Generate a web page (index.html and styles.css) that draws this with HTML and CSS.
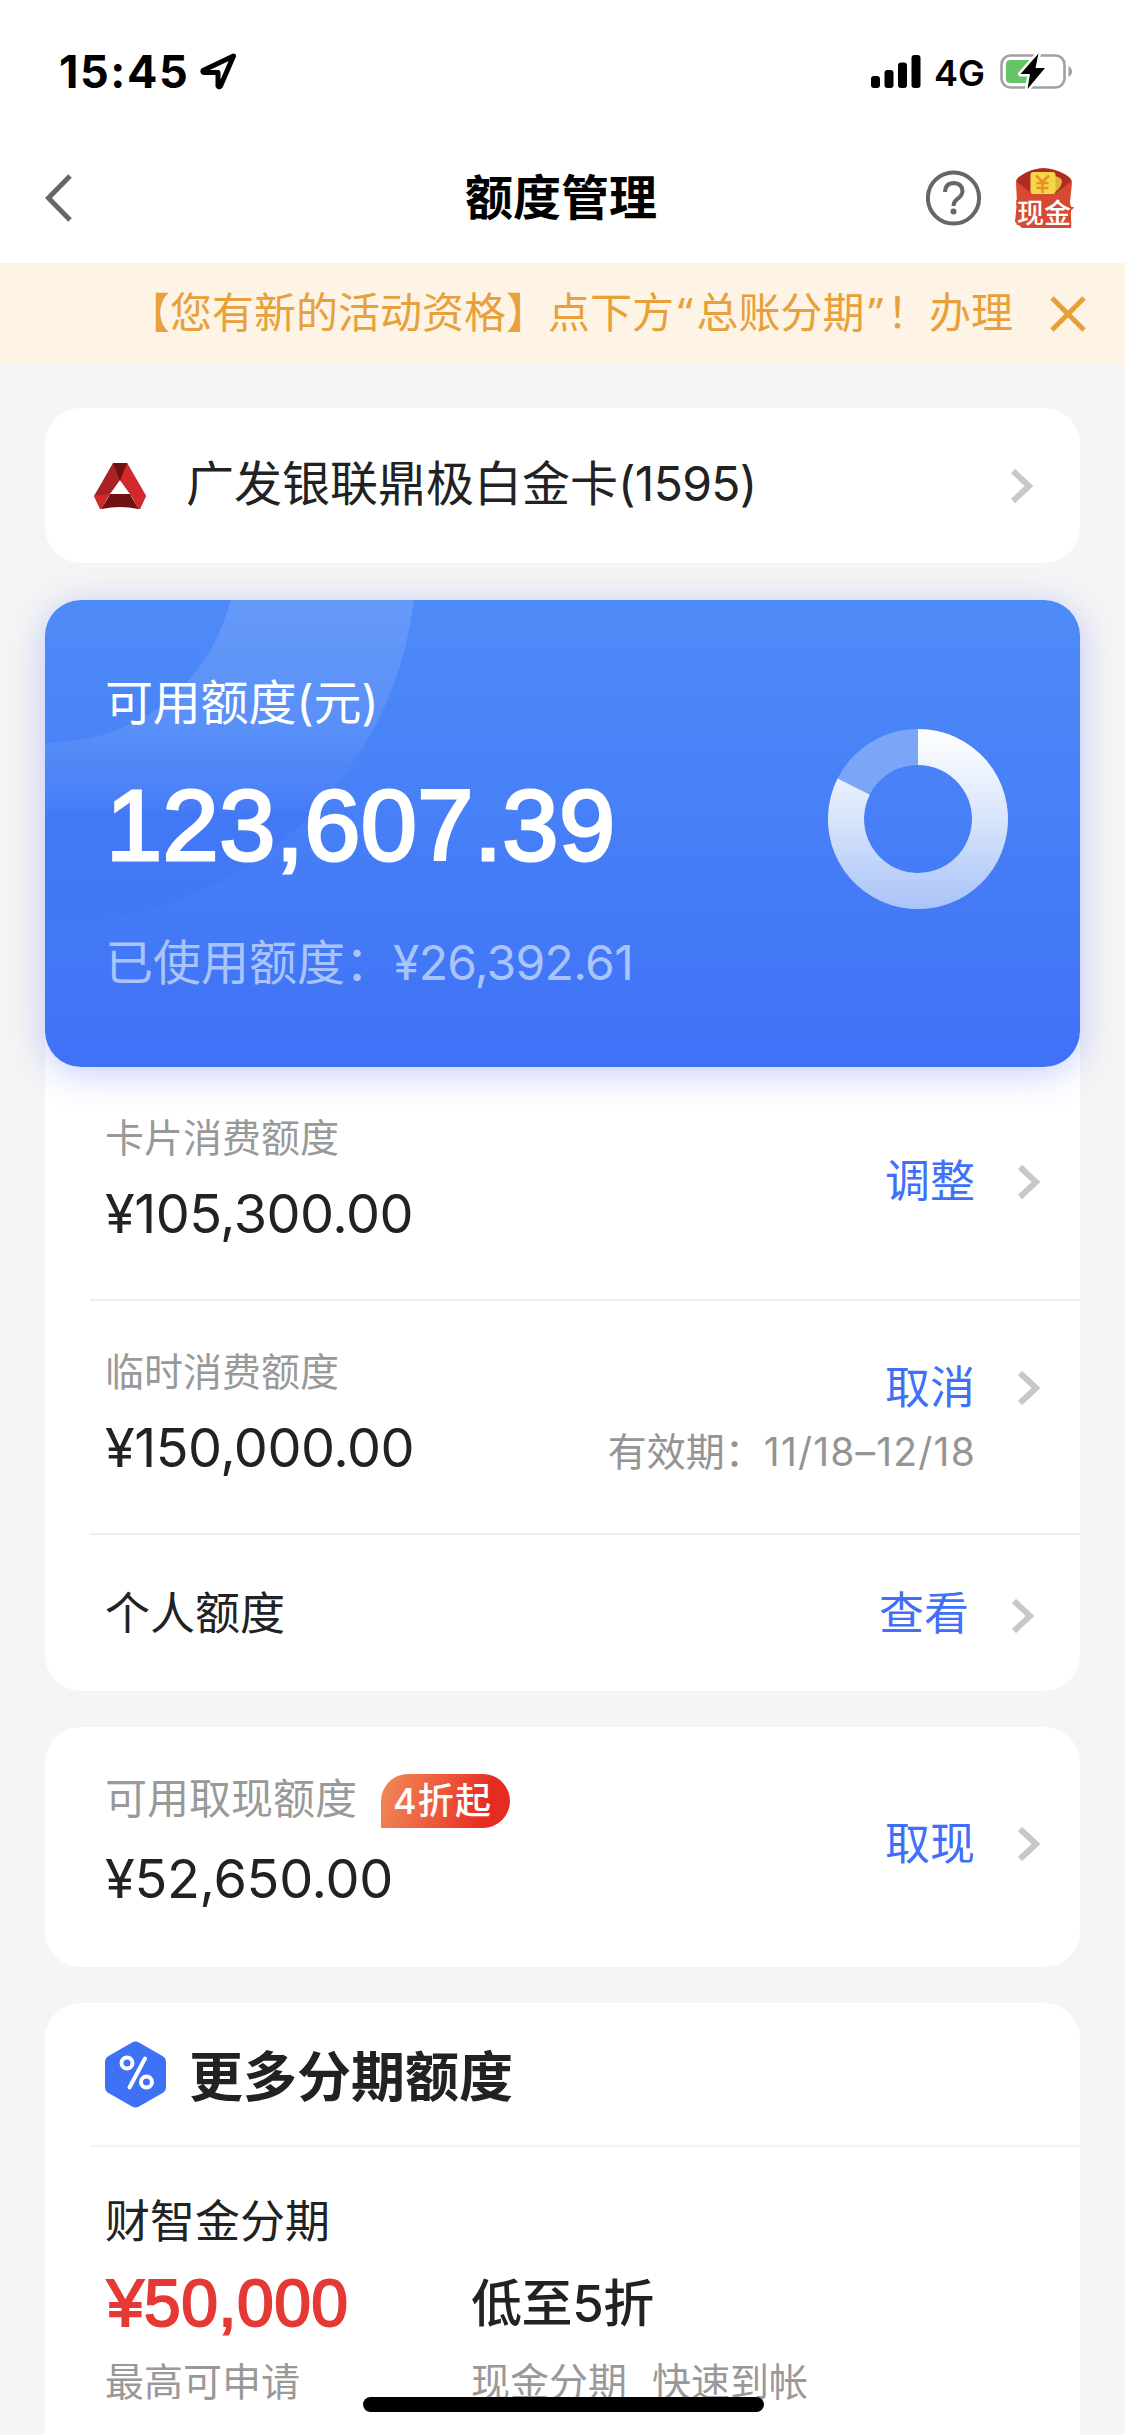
FILE: index.html
```html
<!DOCTYPE html>
<html lang="zh-CN">
<head>
<meta charset="utf-8">
<title>额度管理</title>
<link rel="stylesheet" href="styles.css">
</head>
<body>
<header class="status">
  <div class="status-left">
    <span class="time">15:45</span>
    <svg class="loc" width="38" height="37" viewBox="0 0 38 37"><path d="M34.5 3 L4 17.5 Q3.5 19.500 5 19.500 L19 19.500 L19 33 Q20 35 21.500 33 Z" fill="none" stroke="#000" stroke-width="5" stroke-linejoin="round"/></svg>
  </div>
  <div class="status-right">
    <svg class="signal" width="50" height="34" viewBox="0 0 50 34"><rect x="0" y="21" width="9" height="12" rx="3"/><rect x="13.500" y="15" width="9" height="18" rx="3"/><rect x="27" y="7.500" width="9" height="25.500" rx="3"/><rect x="40.500" y="0" width="9" height="33" rx="3"/></svg>
    <span class="net">4G</span>
    <svg class="battery" width="74" height="38" viewBox="0 0 74 38"><rect x="1.500" y="3.500" width="63" height="32" rx="9" fill="none" stroke="#a0a0a0" stroke-width="2.600"/><rect x="6" y="8" width="28" height="23" rx="4" fill="#65c466"/><path d="M68.500 14 Q72 16 72 19.500 Q72 23 68.500 25 Z" fill="#a0a0a0"/><path d="M38.500 1.500 L20.500 22 L30 22 L27.500 37 L45 16 L35.500 16 Z" fill="#000" stroke="#fff" stroke-width="5" stroke-linejoin="round" paint-order="stroke"/></svg>
  </div>
</header>
<nav class="nav">
  <svg class="back" width="30" height="48" viewBox="0 0 30 48"><path d="M25 2 L3.500 24 L25 46" fill="none" stroke="#666" stroke-width="5"/></svg>
  <h1 class="nav-title">额度管理</h1>
  <div class="nav-actions">
    <svg width="56" height="58" viewBox="0 0 56 58"><circle cx="27.500" cy="29" r="25.600" fill="none" stroke="#666" stroke-width="4"/><path d="M19 23 Q19.500 14 28 14 Q36 14.500 36.500 22 Q36.500 26 32 29.500 Q27.500 32.500 27.500 37" fill="none" stroke="#666" stroke-width="4"/><circle cx="27.500" cy="42.500" r="3" fill="#666"/></svg>
    <svg class="packet" width="60" height="60" viewBox="0 0 60 60"><path d="M2 15 Q2 10 8 7 Q29 -6.500 52 7 Q57.500 10 58 15 L56 34 L57 40 L57 60 L8 60 Q4 56 1 54 L3 34 Z" fill="#d54a30"/><path d="M2 13 Q3 10 8 7 Q29 -6.500 52 7 Q57 10 57.500 13 L42 25 L17 25 Z" fill="#b02c22"/><path d="M40 8 Q48 9 48 14 Q46 24 36 25 Z" fill="#dfb63a"/><rect x="16.500" y="4" width="25" height="22" rx="3" fill="#f5d84a"/><path d="M22 7.500 L28.500 14 L35 7.500 M28.500 14 V25 M22.500 15 H34.500 M22.500 20 H34.500" fill="none" stroke="#e8902c" stroke-width="2.600"/><text class="cash" x="30" y="54.500" text-anchor="middle">现金</text></svg>
  </div>
</nav>
<div class="notice">
  <p class="notice-text">【您有新的活动资格】点下方<span class="quote">“</span>总账分期<span class="quote">”</span>！办理</p>
  <svg width="36" height="36" viewBox="0 0 36 36"><path d="M2 2 L34 34 M34 2 L2 34" stroke="#e8a03a" stroke-width="5"/></svg>
</div>
<main class="page">
  <section class="card picker">
    <svg width="52" height="46" viewBox="0 0 52 46"><path d="M19 0 H33 L51.500 32 L46 45 L36 31 L26 17 L16 31 L6 45 L0 33 Z" fill="#a82226"/><path d="M33 0 L52 33 L46 46 L36.500 31 L26 17 Z" fill="#d3292d"/><path d="M19 0 H33 L26 18 Z" fill="#6f1210"/><path d="M0 33 L15 31 L8 46 H6 Z M52 33 L37 31 L44 46 H46 Z" fill="#d3292d"/><path d="M16 31 H36 L44.500 46 Q26 42 7.500 46 Z" fill="#6f1210"/><path d="M26 20 L32 31 H20 Z" fill="#fff"/></svg>
    <span class="picker-name">广发银联鼎极白金卡<span class="tail">(1595)</span></span>
    <svg class="chev" width="24" height="36" viewBox="0 0 24 36"><path d="M3 3 L19 18 L3 33"/></svg>
  </section>

  <section class="hero">
    <svg class="rings" width="420" height="467" viewBox="0 0 420 467">
      <defs><linearGradient id="fade" gradientUnits="userSpaceOnUse" x1="0" y1="0" x2="0" y2="325"><stop offset="0" stop-color="#fff" stop-opacity=".13"/><stop offset=".38" stop-color="#fff" stop-opacity=".09"/><stop offset=".52" stop-color="#7a9cf8" stop-opacity=".12"/><stop offset=".66" stop-color="#3a6cf5" stop-opacity=".35"/><stop offset="1" stop-color="#3a6cf5" stop-opacity=".2"/></linearGradient></defs>
      <circle cx="5" cy="-43" r="276" fill="none" stroke="url(#fade)" stroke-width="181"/>
    </svg>
    <div class="hero-text">
      <p class="hero-label">可用额度(元)</p>
      <p class="hero-amount">123,607.39</p>
      <p class="hero-used">已使用额度：<span class="used-sum">¥26,392.61</span></p>
    </div>
    <svg class="donut" width="180" height="180" viewBox="0 0 180 180">
      <defs><linearGradient id="ring" gradientUnits="userSpaceOnUse" x1="0" y1="0" x2="0" y2="180"><stop offset="0" stop-color="#fff"/><stop offset=".5" stop-color="#d8e5fb"/><stop offset="1" stop-color="#a9c3f8"/></linearGradient></defs>
      <circle cx="90" cy="90" r="72" fill="none" stroke="#7ba6f8" stroke-width="36"/>
      <path d="M90 0 A90 90 0 1 1 9.600 49.500 L41.800 65.700 A54 54 0 1 0 90 36 Z" fill="url(#ring)"/>
    </svg>
  </section>

  <section class="limits">
    <div class="row row-card">
      <div class="info"><p class="label">卡片消费额度</p><p class="amount">¥105,300.00</p></div>
      <div class="action"><a class="link">调整</a><svg class="chev" width="24" height="36" viewBox="0 0 24 36"><path d="M3 3 L19 18 L3 33"/></svg></div>
    </div>
    <div class="row row-temp">
      <div class="info"><p class="label">临时消费额度</p><p class="amount">¥150,000.00</p></div>
      <div class="side">
        <div class="action"><a class="link">取消</a><svg class="chev" width="24" height="36" viewBox="0 0 24 36"><path d="M3 3 L19 18 L3 33"/></svg></div>
        <p class="expiry">有效期：<span class="dates">11/18–12/18</span></p>
      </div>
    </div>
    <div class="row row-person">
      <p class="name">个人额度</p>
      <div class="action"><a class="link">查看</a><svg class="chev" width="24" height="36" viewBox="0 0 24 36"><path d="M3 3 L19 18 L3 33"/></svg></div>
    </div>
  </section>

  <section class="card cashout">
    <div class="info">
      <div class="cash-head"><p class="label label-lg">可用取现额度</p><span class="badge">4折起</span></div>
      <p class="amount">¥52,650.00</p>
    </div>
    <div class="action"><a class="link">取现</a><svg class="chev" width="24" height="36" viewBox="0 0 24 36"><path d="M3 3 L19 18 L3 33"/></svg></div>
  </section>

  <section class="card more">
    <div class="more-head">
      <svg width="61" height="67" viewBox="0 0 61 67"><path d="M27 1.500 Q30.500 -.5 34 1.500 L57.500 15 Q61 17 61 21 V46 Q61 50 57.500 52 L34 65.500 Q30.500 67.500 27 65.500 L3.500 52 Q0 50 0 46 V21 Q0 17 3.500 15 Z" fill="#3f71f7"/><g fill="none" stroke="#fff" stroke-width="4"><circle cx="22" cy="22" r="5.500"/><circle cx="41.500" cy="41" r="5.500"/><path d="M40 17.500 L24.500 46.500" stroke-linecap="round"/></g></svg>
      <h2 class="more-title">更多分期额度</h2>
    </div>
    <div class="product">
      <p class="name">财智金分期</p>
      <div class="product-cols">
        <div class="col-a"><p class="price">¥50,000</p><p class="label">最高可申请</p></div>
        <div class="col-b"><p class="deal">低至5折</p><p class="label tags"><span>现金分期</span><span>快速到帐</span></p></div>
      </div>
    </div>
  </section>
</main>
<div class="home-bar"></div>
</body>
</html>
```
FILE: styles.css
```css
* { box-sizing: border-box; }
body, h1, h2, p { margin: 0; }
body {
  position: relative;
  display: flex;
  flex-direction: column;
  width: 1125px;
  height: 2435px;
  overflow: hidden;
  background: #f5f5f5;
  color: #222;
  font-family: Inter, "Noto Sans CJK SC", sans-serif;
}
svg { display: block; flex: none; }

.status, .nav { display: flex; justify-content: space-between; background: #fff; }
.status { height: 132px; flex: none; padding: 52px 51px 0 59px; }
.status-left, .status-right { display: flex; align-items: flex-start; height: 40px; }
.time { font-size: 45px; line-height: 40px; font-weight: 700; color: #000; letter-spacing: 1.6px; width: 140px; }
.loc { margin-top: 1px; }
.signal { margin-top: 3px; }
.net { width: 64px; padding-left: 13px; font-size: 36px; line-height: 42px; font-weight: 600; color: #000; }
.battery { margin: 0 0 0 15px; }

.nav { height: 131px; flex: none; align-items: center; padding: 0 51px 0 45px; }
.back { margin-right: 101px; }
.nav-title { font-size: 48px; line-height: 60px; font-weight: 700; color: #000; }
.nav-actions { display: flex; align-items: center; gap: 32px; margin-left: -20px; }
.packet { overflow: visible; }
.cash { font: 500 27px "Noto Sans CJK SC", sans-serif; fill: #fff; stroke: #d54a30; stroke-width: 4px; paint-order: stroke; }

.notice { display: flex; flex: none; align-items: center; justify-content: flex-end; gap: 37px; height: 100px; padding: 2px 39px 0 0; background: #fdf4e6; }
.notice-text { font-size: 42px; line-height: 60px; color: #e8a03a; margin-top: -3px; white-space: nowrap; }
.quote { display: inline-block; width: 22.5px; text-align: center; font-family: "Noto Sans", sans-serif; }

.page { display: flex; flex-direction: column; padding: 45px 45px 0; }
.card { background: #fff; border-radius: 36px; }
.chev { fill: none; stroke: #c7c7cc; stroke-width: 6px; }

.picker { display: flex; align-items: center; height: 155px; padding: 0 46px 0 49px; margin-bottom: 37px; }
.picker-name { flex: 1; padding-left: 40px; font-size: 48px; line-height: 60px; margin-top: -4px; }
.tail { letter-spacing: -.7px; }

.hero {
  position: relative;
  z-index: 1;
  display: flex;
  justify-content: space-between;
  height: 467px;
  padding: 0 72px 0 60px;
  border-radius: 36px;
  background: linear-gradient(#4e8bf7, #4780f7 45%, #3f71f6);
  box-shadow: 0 6px 36px rgba(63, 90, 246, .3);
  color: #fff;
}
.rings { position: absolute; left: 0; top: 0; border-radius: 36px 0 0 36px; }
.hero-text { position: relative; padding-top: 73px; }
.hero-label { font-size: 48px; line-height: 60px; letter-spacing: -.2px; }
.hero-amount { margin: 32px 0 48px 1px; font: 101px/120px "Liberation Sans", sans-serif; letter-spacing: .4px; -webkit-text-stroke: 3px #fff; }
.hero-used { font-size: 48px; line-height: 60px; color: #a9c4fa; }
.used-sum { letter-spacing: -.7px; }
.donut { margin-top: 129px; }

.limits { margin-top: -36px; height: 660px; padding: 36px 0 0 45px; background: #fff; border-radius: 0 0 36px 36px; }
.row { display: flex; justify-content: space-between; padding-left: 15px; border-bottom: 2px solid #eee; }
.row:last-child { border-bottom: 0; }
.row-card { height: 234px; padding-top: 46px; }
.row-temp { height: 234px; padding-top: 46px; }
.row-person { height: 156px; padding-top: 49px; }
.label { font-size: 39px; line-height: 50px; color: #999; white-space: nowrap; }
.amount { font-size: 54px; line-height: 70px; margin-top: 16px; letter-spacing: -.5px; }
.name { font-size: 45px; line-height: 60px; }
.action { display: flex; align-items: center; justify-content: flex-end; gap: 42px; height: 60px; padding-right: 39px; }
.link { font-size: 45px; line-height: 60px; color: #4070f7; }
.row-card .action { margin-top: 39px; }
.row-temp .action { margin-top: 11px; }
.row-person .action { padding-right: 45px; }
.row-person .chev { margin-top: 4px; }
.expiry { font-size: 39px; line-height: 50px; color: #949494; padding-right: 104px; margin-top: 9px; }
.dates { letter-spacing: 1.2px; }

.cashout { display: flex; justify-content: space-between; height: 240px; margin-top: 36px; padding: 47px 0 0 60px; }
.cash-head { display: flex; height: 54px; }
.label-lg { font-size: 42px; }
.badge { width: 129px; height: 54px; margin-left: 24px; padding-left: 12px; border-radius: 27px 27px 27px 0; background: linear-gradient(105deg, #f08a58, #ee5a3c 45%, #e62c22 80%); color: #fff; font-size: 36px; line-height: 54px; font-weight: 500; letter-spacing: 1.2px; }
.cashout .amount { letter-spacing: -.3px; }
.cashout .action { margin-top: 40px; }

.more { height: 500px; margin-top: 36px; }
.more-head { display: flex; align-items: center; gap: 23px; height: 144px; margin-left: 45px; padding-left: 15px; border-bottom: 2px solid #f3f3f3; }
.more-title { font-size: 54px; line-height: 70px; font-weight: 700; padding-top: 7px; }
.product { padding: 45px 0 0 60px; }
.product-cols { display: flex; }
.col-a { width: 366px; }
.price { font: 66px/80px "Liberation Sans", sans-serif; color: #e53935; -webkit-text-stroke: 2px #e53935; letter-spacing: .4px; margin: 11px 0 14px 2px; }
.deal { font-size: 51px; line-height: 80px; font-weight: 500; margin: 12px 0 13px; letter-spacing: -.4px; }
.tags { display: flex; gap: 25px; }

.home-bar { position: absolute; left: 363px; top: 2397px; width: 401px; height: 15px; border-radius: 8px; background: #000; }
```
